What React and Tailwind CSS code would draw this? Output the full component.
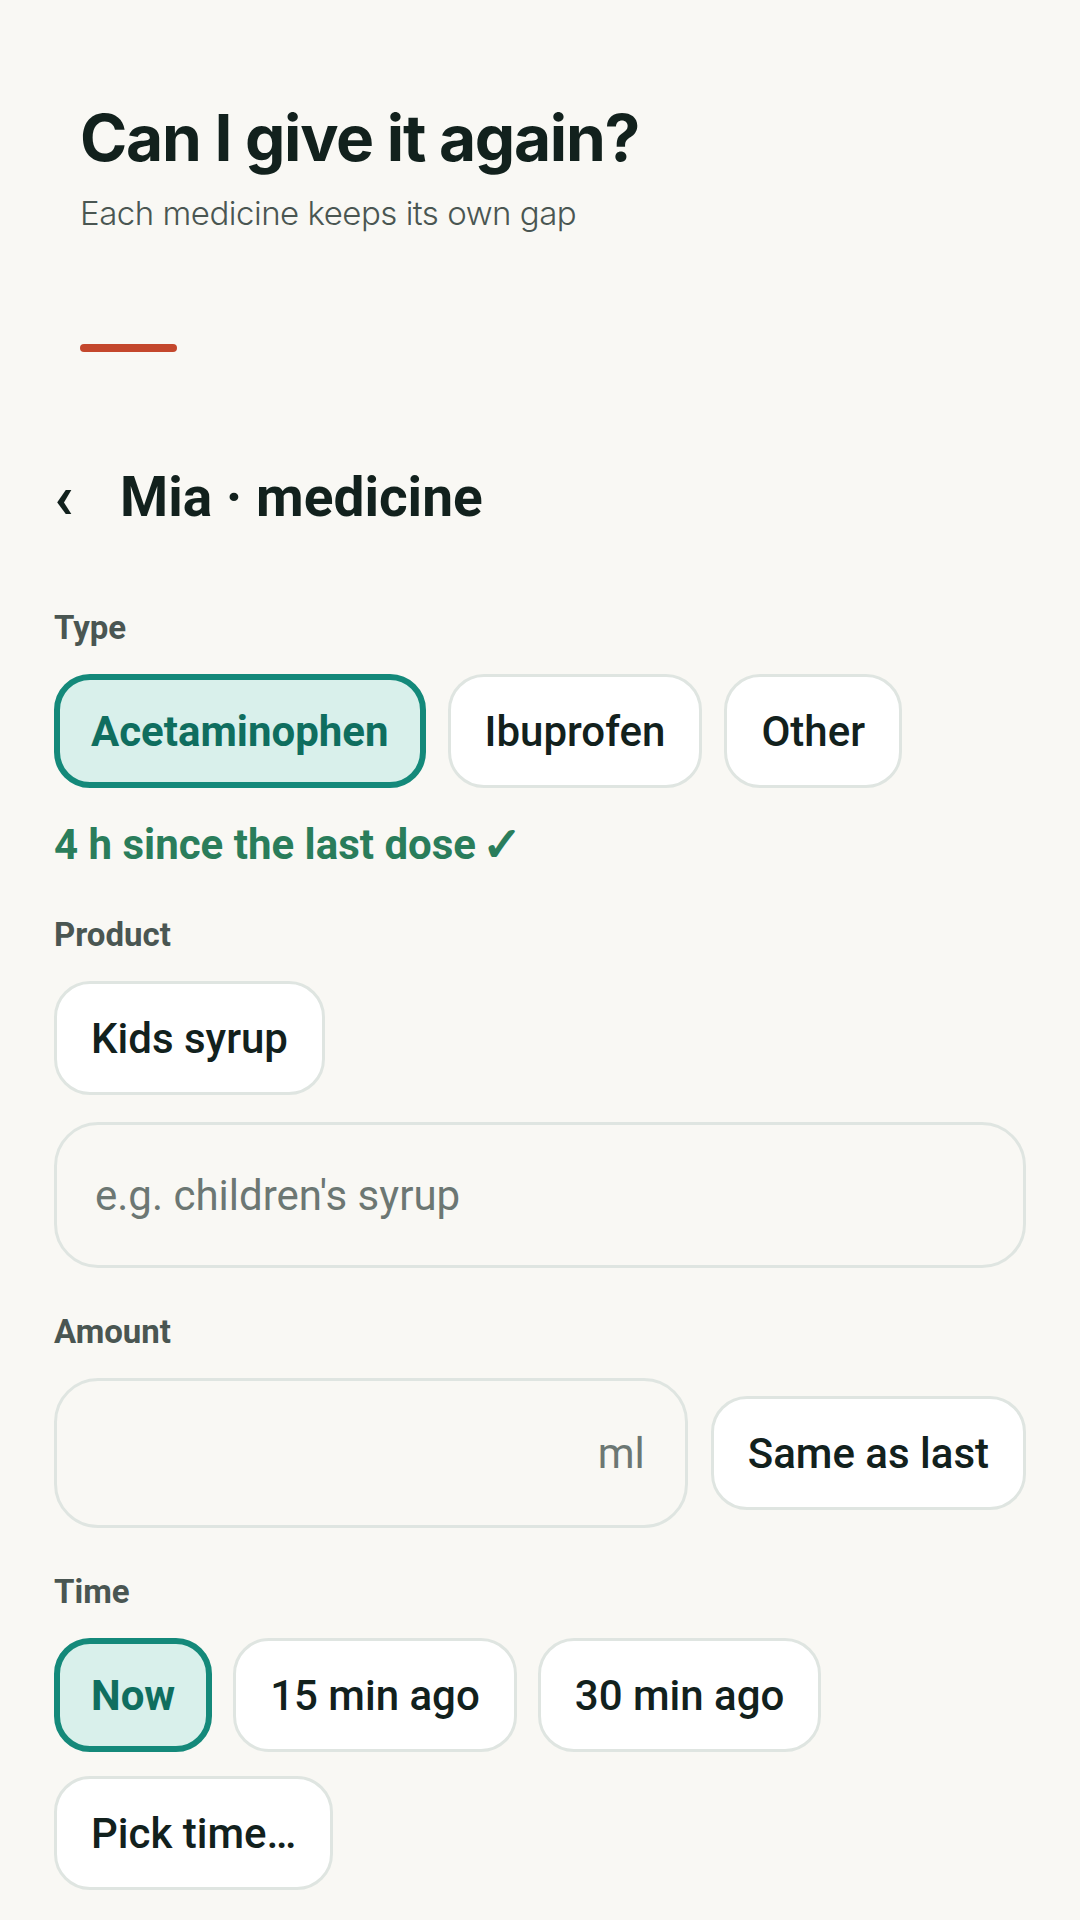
import React from "react";

const Chip = ({ label, selected }) => {
  if (selected) {
    return (
      <button className="h-[114px] shrink-0 whitespace-nowrap rounded-[36px] border-[6px] border-[#14897a] bg-[#d9f0eb] px-[31px] text-[42px] font-bold text-[#0f6e5f]">
        {label}
      </button>
    );
  }
  return (
    <button className="h-[114px] shrink-0 whitespace-nowrap rounded-[36px] border-[3px] border-[#dfe5e1] bg-white px-[34px] text-[42px] font-medium text-[#12211d]">
      {label}
    </button>
  );
};

const Label = ({ children }) => (
  <div className="text-[33px] font-bold leading-[36px] text-[#4a5652]">{children}</div>
);

const App = () => {
  return (
    <div className="min-h-[1920px] bg-[#f9f8f4] font-['Roboto',sans-serif]">
      <header className="px-[80px] pt-[98px]">
        <h1 className="font-['Inter',sans-serif] text-[64px] font-bold leading-[80px] tracking-[-0.02em] text-[#12211d]">
          Can I give it again?
        </h1>
        <p className="mt-[15px] font-['Inter',sans-serif] text-[33px] font-light leading-[40px] tracking-[-0.015em] text-[#4a5652]">
          Each medicine keeps its own gap
        </p>
        <div className="mt-[111px] h-[8px] w-[97px] rounded-full bg-[#c4472c]"></div>
      </header>

      <main className="px-[54px] pt-[112px] pb-[30px]">
        <div className="flex items-center">
          <button className="w-[66px] text-left text-[62px] font-bold leading-[66px] text-[#12211d]">‹</button>
          <h2 className="text-[55px] font-bold leading-[66px] text-[#12211d]">Mia · medicine</h2>
        </div>

        <section className="mt-[80px]">
          <Label>Type</Label>
          <div className="mt-[28px] flex flex-wrap gap-[22px]">
            <Chip label="Acetaminophen" selected />
            <Chip label="Ibuprofen" />
            <Chip label="Other" />
          </div>
          <div className="mt-[34px] flex items-center text-[42px] font-bold leading-[46px] text-[#2a7d5b]">
            <span>4 h since the last dose</span>
            <span className="ml-[6px] text-[48px] font-bold">✓</span>
          </div>
        </section>

        <section className="mt-[49px]">
          <Label>Product</Label>
          <div className="mt-[28px] flex flex-wrap gap-[22px]">
            <Chip label="Kids syrup" />
          </div>
          <input
            className="mt-[27px] h-[146px] w-full rounded-[44px] border-[3px] border-[#dfe5e1] bg-transparent px-[38px] text-[42px] text-[#12211d] outline-none placeholder:text-[#6c7773]"
            placeholder="e.g. children's syrup"
          />
        </section>

        <section className="mt-[46px]">
          <Label>Amount</Label>
          <div className="mt-[28px] flex items-center gap-[23px]">
            <div className="flex h-[150px] min-w-0 flex-1 items-center rounded-[44px] border-[3px] border-[#dfe5e1] pl-[38px] pr-[40px]">
              <input className="min-w-0 flex-1 bg-transparent text-[42px] text-[#12211d] outline-none" />
              <span className="text-[42px] text-[#6c7773]">ml</span>
            </div>
            <Chip label="Same as last" />
          </div>
        </section>

        <section className="mt-[46px]">
          <Label>Time</Label>
          <div className="mt-[28px] flex flex-wrap gap-x-[21px] gap-y-[24px]">
            <Chip label="Now" selected />
            <Chip label="15 min ago" />
            <Chip label="30 min ago" />
            <Chip label="Pick time…" />
          </div>
        </section>
      </main>
    </div>
  );
};

export default App;
